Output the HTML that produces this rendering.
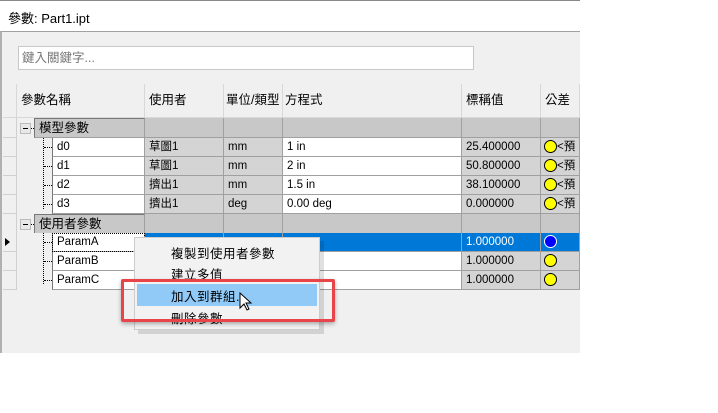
<!DOCTYPE html>
<html><head><meta charset="utf-8"><style>
*{margin:0;padding:0;box-sizing:border-box}
body{width:718px;height:413px;background:#fff;position:relative;overflow:hidden;font-family:"Liberation Sans","Noto Sans CJK TC",sans-serif;font-size:12px;color:#000}
.a{position:absolute}
.c{position:absolute;border-right:1px solid #a0a0a0;border-bottom:1px solid #a0a0a0;padding-left:4px;line-height:18px;white-space:nowrap;overflow:hidden;font-size:11.5px}
.w{background:#fff}.g{background:#d4d4d4}.gg{background:#c8c8c8}.h{background:#f0f0f0;border-color:#d8d8d8;line-height:33px;font-size:12.5px}
.rh{background:#f0f0f0;border-color:#d0d0d0}
.dot{position:absolute;width:13px;height:13px;border-radius:50%;border:1px solid #000;background:#ffff00;top:2px;left:3px}
.mi{position:absolute;left:36px;font-size:12.5px;letter-spacing:0.5px}
</style></head><body>
<div class="a" style="left:0;top:0;width:580px;height:1px;background:#888"></div>
<div class="a" style="left:8px;top:8px;font-size:13px">參數: Part1.ipt</div>
<div class="a" style="left:0;top:31px;width:580px;height:322px;background:#f0f0f0;border-top:1px solid #a0a0a0;border-left:2px solid #b0b0b0"></div>
<div class="a" style="left:18px;top:46px;width:456px;height:24px;background:#fff;border:1px solid #c8c8c8;color:#777;padding-left:3px;line-height:22px;font-size:12.5px">鍵入關鍵字...</div>
<div class="c h" style="left:3px;top:84px;width:14px;height:34px"></div>
<div class="c h" style="left:17px;top:84px;width:128px;height:34px">參數名稱</div>
<div class="c h" style="left:145px;top:84px;width:79px;height:34px">使用者</div>
<div class="c h" style="left:224px;top:84px;width:59px;height:34px;padding-left:2px">單位/類型</div>
<div class="c h" style="left:283px;top:84px;width:179px;height:34px;padding-left:2px">方程式</div>
<div class="c h" style="left:462px;top:84px;width:79px;height:34px">標稱值</div>
<div class="c h" style="left:541px;top:84px;width:39px;height:34px">公差</div>
<div id="rows"></div>
<script>
var rows=[
 ['grp','模型參數',118],
 ['d0','草圖1','mm','1 in','25.400000',138],
 ['d1','草圖1','mm','2 in','50.800000',157],
 ['d2','擠出1','mm','1.5 in','38.100000',176],
 ['d3','擠出1','deg','0.00 deg','0.000000',195],
 ['grp','使用者參數',214],
 ['ParamA','','','','1.000000',233,1],
 ['ParamB','','','','1.000000',252],
 ['ParamC','','','','1.000000',271]];
var h='';
rows.forEach(function(r){
 if(r[0]=='grp'){var y=r[2];
  h+='<div class="c rh" style="left:3px;top:'+y+'px;width:14px;height:20px"></div>';
  h+='<div class="a" style="left:17px;top:'+y+'px;width:17px;height:20px;background:#f0f0f0"></div>';
  h+='<div class="a" style="left:20px;top:'+(y+5)+'px;width:11px;height:11px;background:#e8e8e8;border:1px solid #bbb"><span style="position:absolute;left:2px;top:4px;width:5px;height:1px;background:#000"></span></div>';
  h+='<div class="a" style="left:31px;top:'+(y+10)+'px;width:3px;border-top:1px dotted #000"></div>';
  h+='<div class="c gg" style="left:34px;top:'+y+'px;width:111px;height:20px;border-top:1px solid #777;border-left:1px solid #777;font-size:12.5px">'+r[1]+'</div>';
  h+='<div class="c gg" style="left:145px;top:'+y+'px;width:79px;height:20px"></div><div class="c gg" style="left:224px;top:'+y+'px;width:59px;height:20px"></div><div class="c gg" style="left:283px;top:'+y+'px;width:179px;height:20px"></div><div class="c gg" style="left:462px;top:'+y+'px;width:79px;height:20px"></div><div class="c gg" style="left:541px;top:'+y+'px;width:39px;height:20px"></div>';
 } else {var y=r[5],sel=r[6];
  h+='<div class="c rh" style="left:3px;top:'+y+'px;width:14px;height:19px">'+(sel?'<span style="position:absolute;left:2px;top:5px;border-left:5px solid #000;border-top:4px solid transparent;border-bottom:4px solid transparent"></span>':'')+'</div>';
  h+='<div class="a" style="left:17px;top:'+y+'px;width:35px;height:19px;background:#f0f0f0"></div>';
  h+='<div class="a" style="left:44px;top:'+(y+9)+'px;width:8px;border-top:1px dotted #000"></div>';
  h+='<div class="c w" style="left:52px;top:'+y+'px;width:93px;height:19px;border-left:1px solid #777;'+(sel?'outline:1px dotted #000;outline-offset:-1px':'')+'">'+r[0]+'</div>';
  var bg=sel?'background:#0078d7;color:#fff':'';
  h+='<div class="c g" style="left:145px;top:'+y+'px;width:79px;height:19px;'+bg+'">'+r[1]+'</div>';
  h+='<div class="c g" style="left:224px;top:'+y+'px;width:59px;height:19px;'+bg+'">'+r[2]+'</div>';
  h+='<div class="c w" style="left:283px;top:'+y+'px;width:179px;height:19px;'+bg+'">'+r[3]+'</div>';
  h+='<div class="c g" style="left:462px;top:'+y+'px;width:79px;height:19px;'+bg+'">'+r[4]+'</div>';
  h+='<div class="c g" style="left:541px;top:'+y+'px;width:39px;height:19px;'+bg+'"><span class="dot" style="'+(sel?'background:#0000ff;border-color:#fff':'')+'"></span>'+(r[2]?'<span style="position:absolute;left:16px">&lt;預</span>':'')+'</div>';
 }});
document.getElementById('rows').innerHTML=h;
</script>
<div class="a" style="left:43px;top:138px;height:71px;border-left:1px dotted #000"></div>
<div class="a" style="left:43px;top:233px;height:51px;border-left:1px dotted #000"></div>
<div class="a" style="left:138px;top:241px;width:186px;height:93px;background:rgba(0,0,0,0.12)"></div>
<div class="a" style="left:134px;top:237px;width:186px;height:93px;background:#f2f2f2;border:1px solid #ccc">
 <div class="a" style="left:2px;top:46px;width:180px;height:22px;background:#91c9f7"></div>
 <div class="mi" style="top:5px">複製到使用者參數</div>
 <div class="mi" style="top:26px">建立多值</div>
 <div class="mi" style="top:48px">加入到群組...</div>
 <div class="mi" style="top:70px">刪除參數</div>
</div>
<div class="a" style="left:121px;top:279px;width:214px;height:43px;border:3px solid #e8454a;border-radius:2px;box-shadow:0 2px 4px rgba(0,0,0,.3)"></div>
<svg class="a" style="left:239px;top:292px" width="14" height="20" viewBox="0 0 14 20"><path d="M1 1 L1 16 L5 12 L8 18 L10 17 L7 11 L12 11 Z" fill="#fff" stroke="#000" stroke-width="1"/></svg>
</body></html>
